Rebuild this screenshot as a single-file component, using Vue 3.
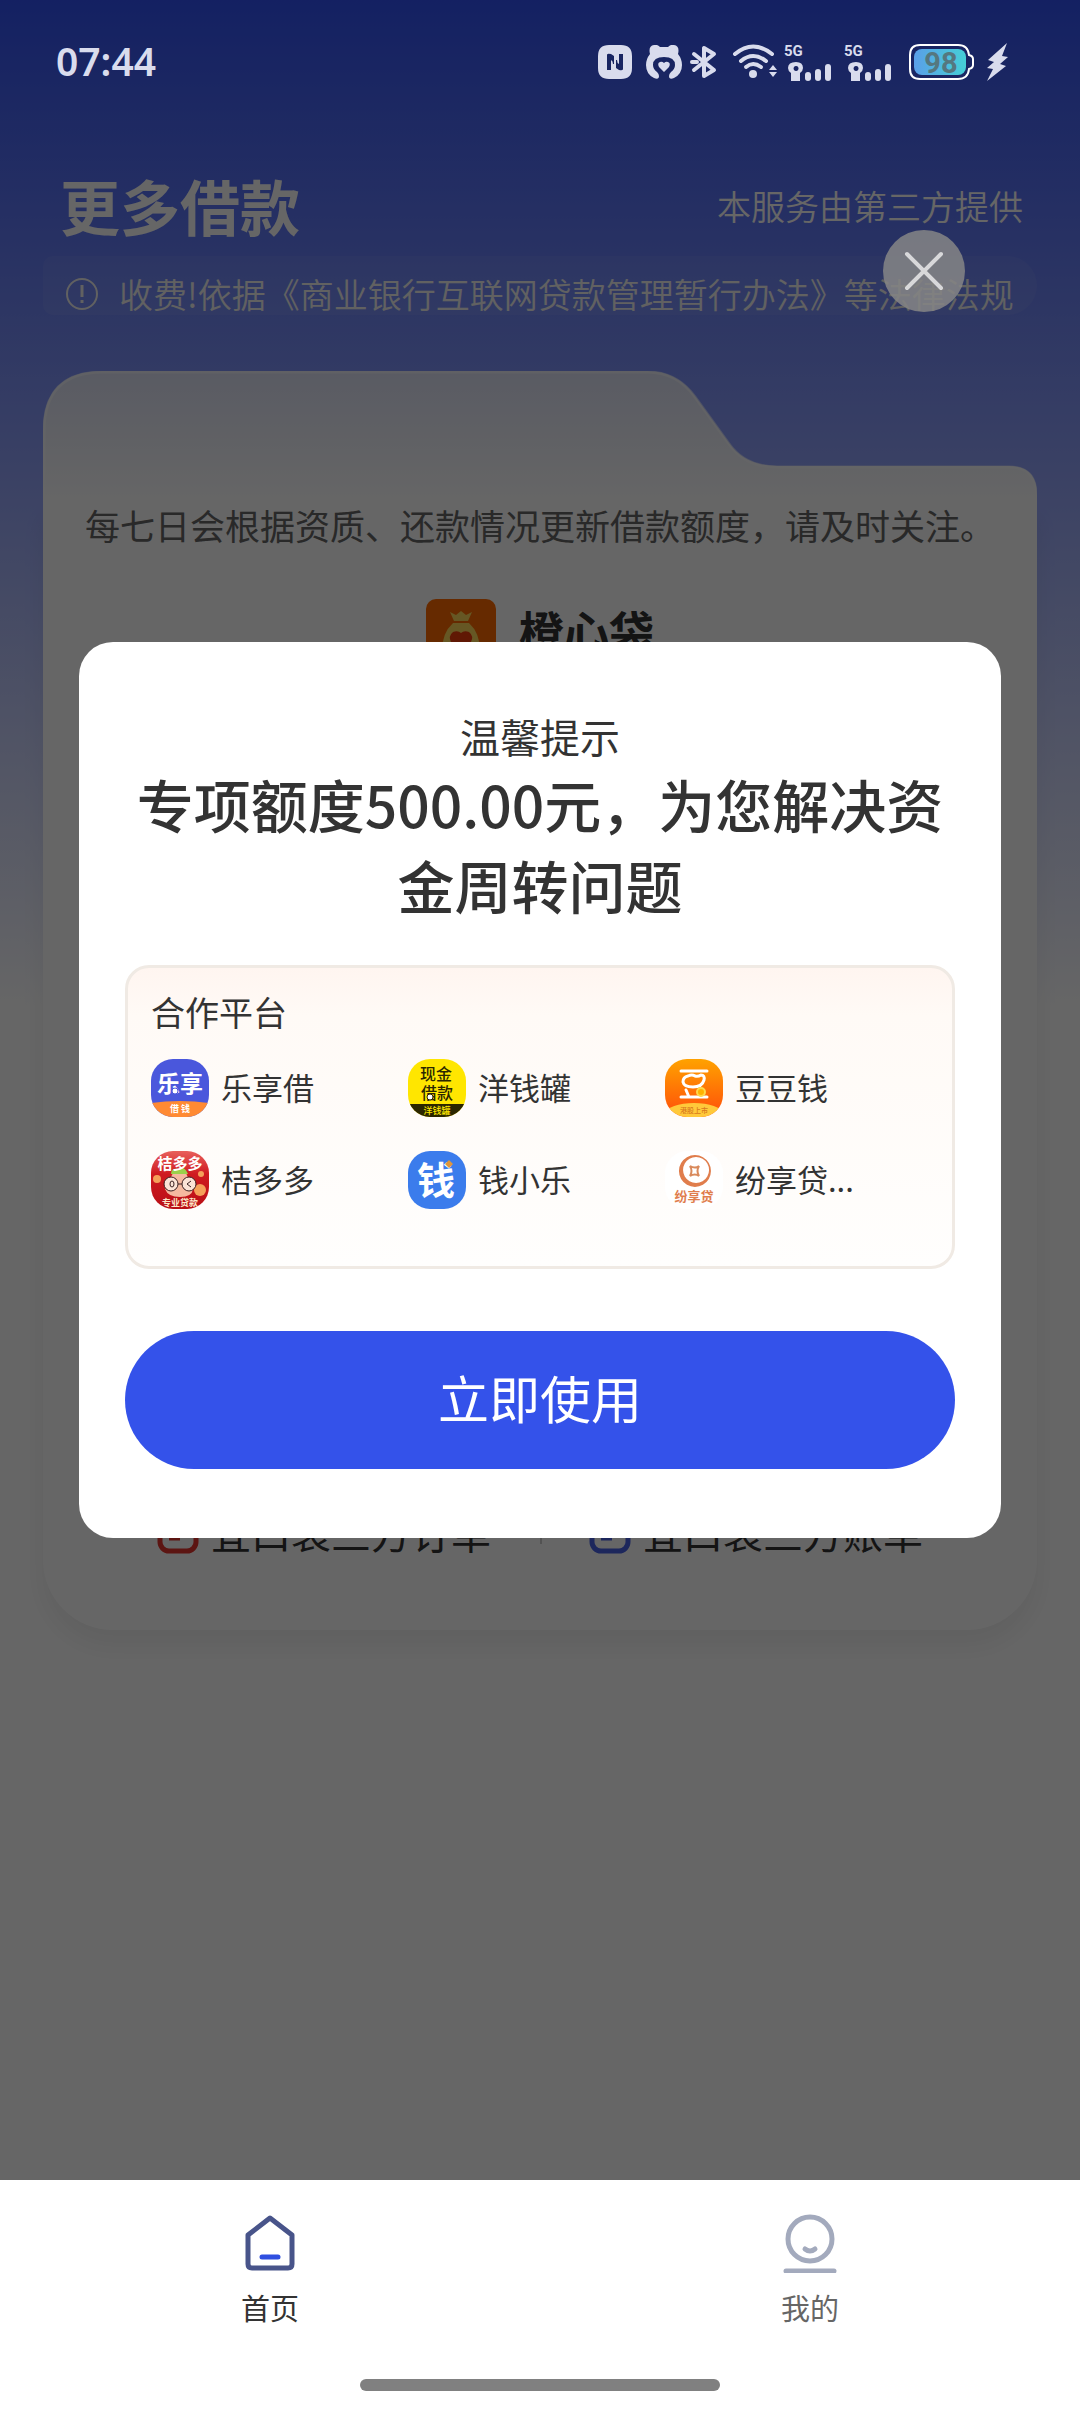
<template>
  <div class="page">
    <header class="status-bar">
      <time class="clock">07:44</time>
      <div class="status-icons">
        <svg class="ico-nfc" width="34" height="34" viewBox="0 0 34 34">
          <path fill-rule="evenodd" fill="#d9dced" d="M11 0h12q11 0 11 11v12q0 11-11 11H11Q0 34 0 23V11Q0 0 11 0ZM9 10v15h4V15q2 1 2 4h1V11l-3-2q-4-1-4 1ZM25 24V9h-4v10q-2-1-2-4h-1v8l3 2q4 1 4-1Z" />
        </svg>
        <svg class="ico-bear" width="36" height="34" viewBox="0 0 36 34">
          <path fill="#d9dced" d="M8 0q3-1 6 2h8q3-3 6-2 6 1 4 9 4 5 4 11 0 9-8 13-5 2-5-2 0-2 2-4 4-3 4-7 0-8-11-8T7 20q0 4 4 7 2 2 2 4 0 4-5 2Q0 29 0 20 0 14 4 9 2 1 8 0Z" />
          <path fill="#d9dced" d="M18 27l-5-5q-2-4 1-5 2-1 4 1 2-2 4-1 3 1 1 5Z" />
        </svg>
        <svg class="ico-bt" width="28" height="34" viewBox="0 0 28 34">
          <path fill="none" stroke="#d9dced" stroke-width="4" stroke-linejoin="round" stroke-linecap="round" d="M4 9l10 8 10-8-10-6v28l10-6-10-8-10 8M2 17h5" />
        </svg>
        <svg class="ico-wifi" width="46" height="36" viewBox="0 0 46 36">
          <g fill="none" stroke="#d9dced" stroke-width="4" stroke-linecap="round">
            <path d="M3 10q18-15 37 0" />
            <path d="M9 17q12-10 25 0" />
            <path d="M14 23q7-6 15 0" />
          </g>
          <circle cx="21" cy="30" r="4" fill="#d9dced" />
          <path fill="#d9dced" d="M37 26l4-5 4 5ZM37 28l4 5 4-5Z" />
        </svg>
        <svg v-for="n in 2" :key="n" class="ico-signal" width="48" height="38" viewBox="0 0 48 38">
          <text x="0" y="13" class="net-text">5G</text>
          <path fill-rule="evenodd" fill="#d9dced" d="M12 19q7 0 7 6 0 3-3 5v8H7v-8q-3-2-3-5 0-6 8-6Zm0 4a2.500 2.500 0 1 0 .1 0Z" />
          <rect x="21" y="29" width="6" height="9" rx="3" fill="#d9dced" />
          <rect x="31" y="26" width="6" height="12" rx="3" fill="#d9dced" />
          <rect x="41" y="21" width="6" height="17" rx="3" fill="#d9dced" />
        </svg>
        <svg class="ico-battery" width="68" height="38" viewBox="0 0 68 38">
          <defs>
            <linearGradient id="charge" x1="0" x2="1">
              <stop offset="0" stop-color="#5a9fe8" />
              <stop offset="1" stop-color="#45cfd6" />
            </linearGradient>
          </defs>
          <path fill="none" stroke="#fff" stroke-width="2" d="M12 2h38q10 0 11 10 4 1 4 4v6q0 3-4 4-1 10-11 10H12Q2 36 2 26V12Q2 2 12 2Z" />
          <rect x="6" y="6" width="52" height="26" rx="8" fill="url(#charge)" />
          <text x="33" y="30" text-anchor="middle" class="charge-text">98</text>
        </svg>
        <svg class="ico-bolt" width="22" height="38" viewBox="0 0 22 38">
          <path fill="#d9dced" d="M21 0L2 17l6 2-7 6 6 1-6 12 19-15-6-2 8-7-6-1Z" />
        </svg>
      </div>
    </header>

    <main class="content">
      <div class="title-row">
        <h1>更多借款</h1>
        <span class="provider">本服务由第三方提供</span>
      </div>

      <div class="notice">
        <svg class="notice-icon" width="34" height="34" viewBox="0 0 34 34">
          <circle cx="17" cy="17" r="15" fill="none" stroke="currentColor" stroke-width="2" />
          <path stroke="currentColor" stroke-width="3" d="M17 8v12M17 23v3" />
        </svg>
        <p>收费!依据《商业银行互联网贷款管理暂行办法》等法律法规</p>
      </div>

      <section class="card">
        <svg class="card-top" viewBox="0 0 994 130" preserveAspectRatio="none">
          <defs>
            <linearGradient id="folder" x1="0" y1="0" x2="0" y2="1">
              <stop offset="0" stop-color="#dfe3f7" />
              <stop offset="1" stop-color="#ffffff" />
            </linearGradient>
          </defs>
          <path fill="url(#folder)" d="M0 130V60Q0 0 60 0H604Q634 0 652 25L686 72Q702 95 734 95H966Q994 95 994 124V130Z" />
          <path fill="none" stroke="#fff" stroke-opacity=".5" stroke-width="3" d="M1 130V60Q1 1 60 1H604Q634 1 652 26L686 73Q702 96 734 96H966Q993 96 993 124V130" />
        </svg>
        <div class="card-body">
          <p class="tip">每七日会根据资质、还款情况更新借款额度，请及时关注。</p>
          <div class="brand">
            <svg width="70" height="70" viewBox="0 0 70 70">
              <rect width="70" height="70" rx="10" fill="#ff6a00" />
              <path fill="#ffd95a" d="M24 13l6 3 5-4 5 4 6-3-4 9H28Z" />
              <path fill="#ffd95a" d="M27 24h16q11 10 11 28 0 10-10 10H26q-10 0-10-10 0-18 11-28Z" />
              <path fill="#f03c0c" d="M35 54L25 43q-3-6 2-10 5-2 8 1 3-3 8-1 5 4 2 10Z" />
            </svg>
            <h2>橙心袋</h2>
          </div>
          <div class="links">
            <a v-for="link in links" :key="link.text" href="#" class="link">
              <svg width="42" height="44" viewBox="0 0 42 44" fill="none" :stroke="link.color" stroke-width="5">
                <rect x="3" y="3" width="36" height="38" rx="9" />
                <path d="M12 15h18M12 28h11" />
              </svg>
              {{ link.text }}
            </a>
          </div>
        </div>
      </section>
    </main>

    <div v-if="showModal" class="mask">
      <button class="close" aria-label="关闭" @click="showModal = false">
        <svg width="40" height="40" viewBox="0 0 40 40">
          <path stroke="#d8d8da" stroke-width="4" stroke-linecap="round" d="M3 3l34 34M37 3L3 37" />
        </svg>
      </button>
      <div class="modal" role="dialog">
        <p class="modal-title">温馨提示</p>
        <h3>专项额度500.00元，为您解决资金周转问题</h3>
        <div class="partners">
          <p class="partners-title">合作平台</p>
          <ul>
            <li>
              <svg width="58" height="58" viewBox="0 0 58 58">
                <defs>
                  <clipPath id="round"><rect width="58" height="58" rx="22" /></clipPath>
                  <linearGradient id="orange" x1="0" y1="0" x2="0" y2="1">
                    <stop offset="0" stop-color="#ffa200" />
                    <stop offset="1" stop-color="#ff4d0a" />
                  </linearGradient>
                  <linearGradient id="red" x1="0" y1="0" x2="0" y2="1">
                    <stop offset="0" stop-color="#e8605c" />
                    <stop offset=".4" stop-color="#cf1a20" />
                    <stop offset="1" stop-color="#b90f16" />
                  </linearGradient>
                </defs>
                <g clip-path="url(#round)">
                  <rect width="58" height="58" fill="#4a57dc" />
                  <path fill="#ff8a33" d="M0 44q29-4 58 0v14H0Z" />
                  <text x="29" y="33" class="logo-text" font-size="23" fill="#fff">乐享</text>
                  <circle cx="24" cy="32" r="3" fill="#fff" stroke="#4a57dc" stroke-width="1" />
                  <text x="29" y="53" class="logo-text" font-size="9" fill="#fff">借 钱</text>
                </g>
              </svg>
              <span>乐享借</span>
            </li>
            <li>
              <svg width="58" height="58" viewBox="0 0 58 58">
                <g clip-path="url(#round)">
                  <rect width="58" height="58" fill="#ffe600" />
                  <rect y="45" width="58" height="13" fill="#2b2600" />
                  <text x="28" y="21" class="logo-text mid" font-size="16" fill="#2b2600">现金</text>
                  <text x="29" y="40" class="logo-text mid" font-size="16" fill="#2b2600">借款</text>
                  <circle cx="22" cy="38" r="3" fill="#fff" stroke="#2b2600" stroke-width="1" />
                  <text x="29" y="55" class="logo-text mid" font-size="9" fill="#ffe600">洋钱罐</text>
                </g>
              </svg>
              <span>洋钱罐</span>
            </li>
            <li>
              <svg width="58" height="58" viewBox="0 0 58 58">
                <g clip-path="url(#round)">
                  <rect width="58" height="58" fill="url(#orange)" />
                  <g fill="none" stroke="#fff" stroke-width="3" stroke-linecap="round">
                    <path d="M16 12h26M16 38h26M21 31l3 7" />
                    <path d="M23 17q4-2 7 0 3 1 6-1 4 0 3 5-2 7-11 7-9 0-10-5 0-5 5-6Z" />
                  </g>
                  <circle cx="36" cy="33" r="4" fill="#ffb400" stroke="#ffd84a" stroke-width="2" />
                  <ellipse cx="29" cy="54" rx="28" ry="10" fill="#ffc93a" />
                  <text x="29" y="54" class="logo-text mid" font-size="7" fill="#d9791c">港股上市</text>
                </g>
              </svg>
              <span>豆豆钱</span>
            </li>
            <li>
              <svg width="58" height="58" viewBox="0 0 58 58">
                <g clip-path="url(#round)">
                  <rect width="58" height="58" fill="url(#red)" />
                  <circle cx="6" cy="28" r="4" fill="#f5a05a" />
                  <circle cx="49" cy="39" r="6" fill="#f5a05a" />
                  <circle cx="50" cy="23" r="3" fill="#f5a05a" />
                  <path fill="#f5b9a0" d="M22 22q7-4 13 0l7 16q-1 8-13 8t-15-8Z" />
                  <path fill="#9ad14b" d="M20 23q0-6 7-5 6-4 10 5Z" />
                  <g fill="#fbe3d6" stroke="#3a2020" stroke-width="1">
                    <circle cx="20" cy="33" r="7" />
                    <circle cx="38" cy="33" r="7" />
                    <path fill="none" d="M27 33h4M40 30l-4 3 4 3" />
                    <ellipse cx="21" cy="33" rx="2" ry="3" />
                  </g>
                  <text x="29" y="18" class="logo-text" font-size="15" fill="#fff">桔多多</text>
                  <text x="29" y="55" class="logo-text" font-size="9" fill="#fbe6c8">专业贷款</text>
                </g>
              </svg>
              <span>桔多多</span>
            </li>
            <li>
              <svg width="58" height="58" viewBox="0 0 58 58">
                <rect width="58" height="58" rx="22" fill="#3b7cec" />
                <text x="28" y="43" class="logo-text" font-size="38" fill="#fff">钱</text>
                <path fill="#e0963a" d="M41 9l4 4-4 4-4-4Z" />
              </svg>
              <span>钱小乐</span>
            </li>
            <li>
              <svg width="58" height="58" viewBox="0 0 58 58">
                <rect width="58" height="58" rx="22" fill="#fff" />
                <path fill-rule="evenodd" fill="#e07d4c" d="M30 4a16 16 0 1 1-.1 0Zm1 2a13 13 0 1 0 .1 0Z" />
                <path fill="none" stroke="#d98a5c" stroke-width="2" d="M25 15q5 3 9 0-3 5 0 10-4-3-9 0 3-5 0-10Z" />
                <text x="29" y="50" class="logo-text" font-size="13" fill="#e07d4c">纷享贷</text>
              </svg>
              <span>纷享贷...</span>
            </li>
          </ul>
        </div>
        <button class="use-btn" @click="showModal = false">立即使用</button>
      </div>
    </div>

    <nav class="tab-bar">
      <div class="tabs">
        <a href="#" class="tab active">
          <svg width="60" height="60" viewBox="0 0 60 60">
            <path fill="none" stroke="#48548a" stroke-width="5" stroke-linejoin="round" d="M30 5L52 22V51Q52 55 48 55H12Q8 55 8 51V22Z" />
            <path stroke="#2f4fe0" stroke-width="5" stroke-linecap="round" d="M22 44h16" />
          </svg>
          首页
        </a>
        <a href="#" class="tab">
          <svg width="60" height="60" viewBox="0 0 60 60" fill="none" stroke="#a3aabd" stroke-width="5" stroke-linecap="round">
            <circle cx="30" cy="26" r="22" />
            <path d="M6 58h48" />
            <path d="M25 36q5 4 10 0" />
          </svg>
          我的
        </a>
      </div>
      <div class="home-indicator"></div>
    </nav>
  </div>
</template>

<script setup>
import { ref } from 'vue'

const showModal = ref(true)

const links = [
  { text: '宜口袋三方订单', color: '#e5352f' },
  { text: '宜口袋三方账单', color: '#4a63e6' }
]
</script>

<style>
body {
  background: #fff;
}
</style>

<style scoped>
.page {
  position: relative;
  display: flex;
  flex-direction: column;
  min-height: 100vh;
  font-family: "Noto Sans CJK SC", "Noto Sans", sans-serif;
  color: #333;
  background: linear-gradient(180deg, #3252f5 0, #fff 1005px);
}
h1, h2, h3, p, ul {
  margin: 0;
  padding: 0;
}
a {
  color: inherit;
  text-decoration: none;
}
svg {
  display: block;
  flex-shrink: 0;
}

/* 状态栏，显示在遮罩之上 */
.status-bar {
  position: relative;
  z-index: 3;
  display: flex;
  align-items: center;
  justify-content: space-between;
  height: 124px;
  padding: 0 72px 0 56px;
}
.clock {
  padding-bottom: 2px;
  font: 600 39px/48px "Noto Sans", sans-serif;
  color: #d9dced;
}
.status-icons {
  display: flex;
  align-items: center;
}
.ico-bear {
  margin-left: 14px;
}
.ico-bt {
  margin-left: 8px;
}
.ico-wifi {
  margin-left: 14px;
}
.ico-signal {
  margin-left: 6px;
}
.ico-signal + .ico-signal {
  margin-left: 12px;
}
.ico-battery {
  margin-left: 16px;
}
.ico-bolt {
  margin-left: 10px;
}
.net-text {
  font: 700 15px "Liberation Sans Narrow", Roboto, sans-serif;
  fill: #d9dced;
}
.charge-text {
  font: 700 29px Roboto, sans-serif;
  fill: #55777f;
}

.content {
  flex: 1;
  padding: 39px 43px 0;
}
.title-row {
  display: flex;
  align-items: center;
  justify-content: space-between;
  padding: 0 14px 0 17px;
  color: #fff;
}
.title-row h1 {
  font-size: 60px;
  line-height: 84px;
}
.provider {
  font-size: 34px;
  font-weight: 350;
}
.notice {
  display: flex;
  align-items: center;
  gap: 20px;
  margin-top: 9px;
  padding: 17px 24px 0 22px;
  border-radius: 10px 30px 30px 10px;
  background: rgba(255, 255, 255, 0.06);
  color: #f2f2f2;
}
.notice p {
  font-size: 34px;
  font-weight: 350;
  line-height: 42px;
  white-space: nowrap;
}

.card {
  margin-top: 56px;
}
.card-top {
  position: relative;
  width: 100%;
  height: 130px;
}
.card-body {
  display: flex;
  flex-direction: column;
  align-items: center;
  min-height: 1129px;
  box-sizing: border-box;
  padding: 0 0 74px;
  border-radius: 0 0 70px 70px;
  background: #fff;
  box-shadow: 0 16px 24px rgba(0, 0, 0, 0.06);
}
.tip {
  font-size: 35px;
  line-height: 48px;
  color: #666;
}
.brand {
  display: flex;
  align-items: flex-start;
  gap: 23px;
  margin-top: 50px;
}
.brand h2 {
  font-size: 45px;
  line-height: 64px;
}
.links {
  display: flex;
  align-self: stretch;
  margin-top: auto;
  padding: 0 65px;
}
.link {
  flex: 1;
  display: flex;
  align-items: center;
  justify-content: center;
  gap: 12px;
  font-size: 40px;
  line-height: 48px;
}
.link + .link {
  background: linear-gradient(#ccc, #ccc) left center / 2px 24px no-repeat;
}

.mask {
  position: absolute;
  inset: 0;
  z-index: 2;
  display: flex;
  flex-direction: column;
  padding: 230px 79px 0;
  background: rgba(0, 0, 0, 0.6);
}
.close {
  display: flex;
  align-items: center;
  justify-content: center;
  align-self: flex-end;
  width: 82px;
  height: 82px;
  margin: 0 36px 330px 0;
  border: none;
  border-radius: 50%;
  background: rgba(134, 134, 134, 0.85);
  cursor: pointer;
}
.modal {
  padding: 70px 46px 69px;
  border-radius: 34px;
  background: #fff;
  text-align: center;
}
.modal-title {
  font-size: 40px;
  line-height: 48px;
}
.modal h3 {
  margin-top: 3px;
  font-size: 57px;
  font-weight: 500;
  line-height: 81px;
}
.partners {
  margin-top: 40px;
  padding: 20px 30px 57px 23px;
  border: 3px solid #f0eae4;
  border-radius: 24px;
  background: linear-gradient(180deg, #fff5f0 0, #fffaf6 16%, #fffefd 100%);
  text-align: left;
}
.partners-title {
  font-size: 34px;
  line-height: 48px;
}
.partners ul {
  display: grid;
  grid-template-columns: repeat(3, 1fr);
  row-gap: 34px;
  margin-top: 23px;
  list-style: none;
}
.partners li {
  display: flex;
  align-items: center;
  gap: 12px;
  font-size: 31px;
  line-height: 44px;
}
.partners li span {
  padding-bottom: 2px;
}
.logo-text {
  font-family: "Noto Sans CJK SC", sans-serif;
  font-weight: 700;
  text-anchor: middle;
}
.logo-text.mid {
  font-weight: 500;
}
.use-btn {
  display: block;
  width: 100%;
  height: 138px;
  margin-top: 62px;
  padding: 0 0 7px;
  border: none;
  border-radius: 69px;
  background: #3452ea;
  color: #fff;
  font-family: inherit;
  font-size: 51px;
  cursor: pointer;
}

.tab-bar {
  position: relative;
  z-index: 3;
  padding: 33px 0 21px;
  background: #fff;
}
.tabs {
  display: flex;
}
.tab {
  flex: 1;
  display: flex;
  flex-direction: column;
  align-items: center;
  gap: 12px;
  font-size: 29px;
  line-height: 44px;
  color: #666;
}
.tab.active {
  color: #333;
}
.home-indicator {
  width: 360px;
  max-width: 60%;
  height: 12px;
  margin: 50px auto 0;
  border-radius: 6px;
  background: #808080;
}
</style>
